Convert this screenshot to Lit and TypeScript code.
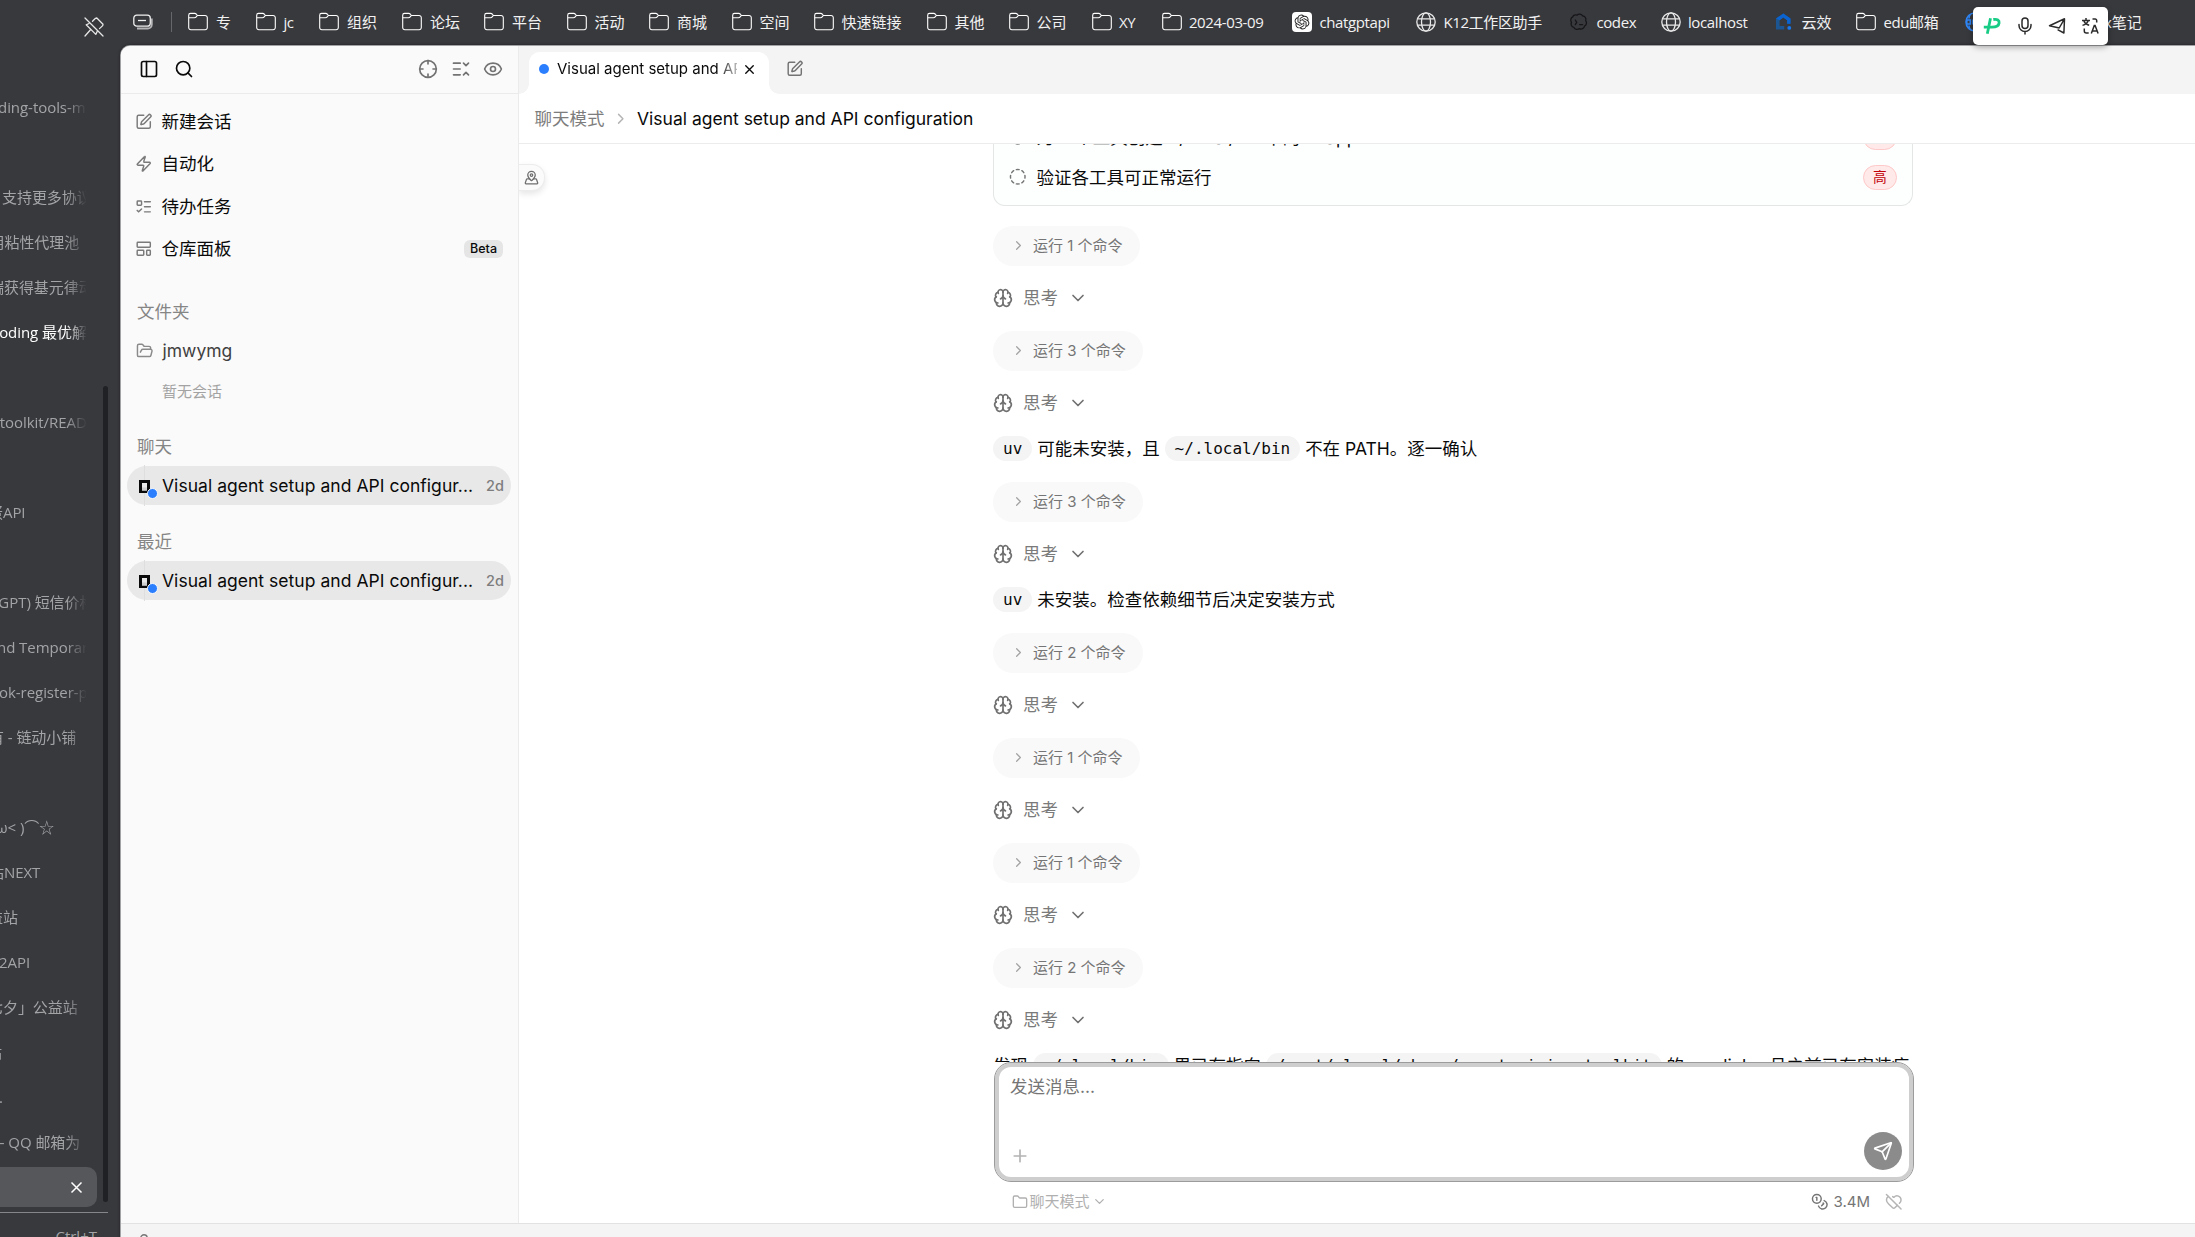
import { LitElement, html, css, svg, nothing } from "lit";
import { customElement } from "lit/decorators.js";
import { styleMap } from "lit/directives/style-map.js";

const ICONS: Record<string, any> = {
  panelLeft: svg`<rect width="18" height="18" x="3" y="3" rx="2"/><path d="M9 3v18"/>`,
  search: svg`<circle cx="11" cy="11" r="8"/><path d="m21 21-4.3-4.3"/>`,
  crosshair: svg`<circle cx="12" cy="12" r="10"/><path d="M22 12h-4M6 12H2M12 6V2M12 22v-4"/>`,
  listCollapse: svg`<path d="M3 5h8M3 12h8M3 19h8"/><path d="m15 5 3 3 3-3"/><path d="m15 19 3-3 3 3"/>`,
  eye: svg`<path d="M2.062 12.348a1 1 0 0 1 0-.696 10.75 10.75 0 0 1 19.876 0 1 1 0 0 1 0 .696 10.75 10.75 0 0 1-19.876 0"/><circle cx="12" cy="12" r="3"/>`,
  squarePen: svg`<path d="M12 3H5a2 2 0 0 0-2 2v14a2 2 0 0 0 2 2h14a2 2 0 0 0 2-2v-7"/><path d="M18.375 2.625a1 1 0 0 1 3 3l-9.013 9.014a2 2 0 0 1-.853.505l-2.873.84a.5.5 0 0 1-.62-.62l.84-2.873a2 2 0 0 1 .506-.852z"/>`,
  zap: svg`<path d="M4 14a1 1 0 0 1-.78-1.63l9.9-10.2a.5.5 0 0 1 .86.46l-1.92 6.02A1 1 0 0 0 13 10h7a1 1 0 0 1 .78 1.63l-9.9 10.2a.5.5 0 0 1-.86-.46l1.92-6.02A1 1 0 0 0 11 14z"/>`,
  listTodo: svg`<rect x="3" y="4" width="6" height="6" rx="1"/><path d="m3 17 2 2 4-4"/><path d="M13 5h8M13 12h8M13 19h8"/>`,
  layout: svg`<rect width="18" height="7" x="3" y="3" rx="1"/><rect width="9" height="7" x="3" y="14" rx="1"/><rect width="5" height="7" x="16" y="14" rx="1"/>`,
  folderOpen: svg`<path d="m6 14 1.5-2.9A2 2 0 0 1 9.24 10H20a2 2 0 0 1 1.94 2.5l-1.54 6a2 2 0 0 1-1.95 1.5H4a2 2 0 0 1-2-2V5a2 2 0 0 1 2-2h3.9a2 2 0 0 1 1.69.9l.81 1.2a2 2 0 0 0 1.67.9H18a2 2 0 0 1 2 2v2"/>`,
  folder: svg`<path d="M20 20a2 2 0 0 0 2-2V8a2 2 0 0 0-2-2h-7.9a2 2 0 0 1-1.69-.9L9.6 3.9A2 2 0 0 0 7.93 3H4a2 2 0 0 0-2 2v13a2 2 0 0 0 2 2Z"/>`,
  x: svg`<path d="M18 6 6 18M6 6l12 12"/>`,
  plus: svg`<path d="M5 12h14M12 5v14"/>`,
  chevronRight: svg`<path d="m9 18 6-6-6-6"/>`,
  chevronDown: svg`<path d="m6 9 6 6 6-6"/>`,
  mapPin: svg`<path d="M18 8c0 3.613-3.869 7.429-5.393 8.795a1 1 0 0 1-1.214 0C9.87 15.429 6 11.613 6 8a6 6 0 0 1 12 0"/><circle cx="12" cy="8" r="2"/><path d="M8.714 14h-3.71a1 1 0 0 0-.948.683l-2.004 6A1 1 0 0 0 3 22h18a1 1 0 0 0 .948-1.316l-2-6a1 1 0 0 0-.949-.684h-3.712"/>`,
  dashed: svg`<path d="M10.1 2.182a10 10 0 0 1 3.8 0"/><path d="M13.9 21.818a10 10 0 0 1-3.8 0"/><path d="M17.609 3.721a10 10 0 0 1 2.69 2.7"/><path d="M2.182 13.9a10 10 0 0 1 0-3.8"/><path d="M20.279 17.609a10 10 0 0 1-2.7 2.69"/><path d="M21.818 10.1a10 10 0 0 1 0 3.8"/><path d="M3.721 6.391a10 10 0 0 1 2.7-2.69"/><path d="M6.391 20.279a10 10 0 0 1-2.69-2.7"/>`,
  brain: svg`<path d="M12 18V5"/><path d="M15 13a4.17 4.17 0 0 1-3-4 4.17 4.17 0 0 1-3 4"/><path d="M17.598 6.5A3 3 0 1 0 12 5a3 3 0 1 0-5.598 1.5"/><path d="M17.997 5.125a4 4 0 0 1 2.526 5.77"/><path d="M18 18a4 4 0 0 0 2-7.464"/><path d="M19.967 17.483A4 4 0 1 1 12 18a4 4 0 1 1-7.967-.517"/><path d="M6 18a4 4 0 0 1-2-7.464"/><path d="M6.003 5.125a4 4 0 0 0-2.526 5.77"/>`,
  send: svg`<path d="M14.536 21.686a.5.5 0 0 0 .937-.024l6.5-19a.496.496 0 0 0-.635-.635l-19 6.5a.5.5 0 0 0-.024.937l7.93 3.18a2 2 0 0 1 1.112 1.11z"/><path d="m21.854 2.147-10.94 10.939"/>`,
  coins: svg`<circle cx="8" cy="8" r="6"/><path d="M18.09 10.37A6 6 0 1 1 10.34 18"/><path d="M7 6h1v4"/><path d="m16.71 13.88.7.71-2.82 2.82"/>`,
  heartOff: svg`<path d="M10.5 4.893a5.5 5.5 0 0 1 1.091.931.56.56 0 0 0 .818 0A5.49 5.49 0 0 1 22 9.5c0 1.872-1.002 3.356-2.187 4.655"/><path d="m16.967 16.967-3.459 3.346a2 2 0 0 1-3 .019L5 15c-1.5-1.5-3-3.2-3-5.5a5.5 5.5 0 0 1 2.747-4.761"/><path d="m2 2 20 20"/>`,
};

const icon = (name: string, size = 20, stroke = 2, cls = "") => html`<svg
  class="ic ${cls}" width=${size} height=${size} viewBox="0 0 24 24" fill="none"
  stroke="currentColor" stroke-width=${stroke} stroke-linecap="round" stroke-linejoin="round"
>${ICONS[name]}</svg>`;

const GLYPHS: Record<string, any> = {
  folder: html`<svg class="ic" width="20" height="20" viewBox="0 0 20 20" fill="none" stroke="#fff" stroke-width="1.1"><path d="M.7 3.2A1.8 1.8 0 0 1 2.5 1.4h4.3c.6 0 1 .2 1.4.6l1.2 1.5h7.7a2.2 2.2 0 0 1 2.2 2.2v9.8a2.2 2.2 0 0 1-2.2 2.2H2.9a2.2 2.2 0 0 1-2.2-2.2z"/><path d="M.7 5.7h5.6c.8 0 1.400-.2 1.900-.8l1.200-1.400"/></svg>`,
  globe: html`<svg class="ic" width="20" height="20" viewBox="0 0 20 20" fill="none" stroke="#e8e8e8" stroke-width="1.300"><circle cx="10" cy="10" r="9.200"/><ellipse cx="10" cy="10" rx="4.500" ry="9.200"/><path d="M1.500 6.800h17M1.500 13.200h17"/></svg>`,
  blueGlobe: html`<svg class="ic" width="20" height="20" viewBox="0 0 20 20" fill="none" stroke="#2f86f6" stroke-width="1.600"><circle cx="10" cy="10" r="9"/><path d="M5 2.500a14 14 0 0 0-1 4M5 17.500a14 14 0 0 1-1-4"/><rect x="1.800" y="8" width="3.500" height="4"/><path d="M8 7.500v5"/></svg>`,
  openai: html`<svg class="ic" width="20" height="20" viewBox="0 0 20 20"><rect width="20" height="20" rx="4" fill="#fff"/><path transform="translate(2.600 2.600) scale(.617)" fill="#222" d="M22.2819 9.8211a5.9847 5.9847 0 0 0-.5157-4.9108 6.0462 6.0462 0 0 0-6.5098-2.9A6.0651 6.0651 0 0 0 4.9807 4.1818a5.9847 5.9847 0 0 0-3.9977 2.9 6.0462 6.0462 0 0 0 .7427 7.0966 5.98 5.98 0 0 0 .511 4.9107 6.051 6.051 0 0 0 6.5146 2.9001A5.9847 5.9847 0 0 0 13.2599 24a6.0557 6.0557 0 0 0 5.7718-4.2058 5.9894 5.9894 0 0 0 3.9977-2.9001 6.0557 6.0557 0 0 0-.7475-7.0729zm-9.022 12.6081a4.4755 4.4755 0 0 1-2.8764-1.0408l.1419-.0804 4.7783-2.7582a.7948.7948 0 0 0 .3927-.6813v-6.7369l2.02 1.1686a.071.071 0 0 1 .038.052v5.5826a4.504 4.504 0 0 1-4.4945 4.4944zm-9.6607-4.1254a4.4708 4.4708 0 0 1-.5346-3.0137l.142.0852 4.783 2.7582a.7712.7712 0 0 0 .7806 0l5.8428-3.3685v2.3324a.0804.0804 0 0 1-.0332.0615L9.74 19.9502a4.4992 4.4992 0 0 1-6.1408-1.6464zM2.3408 7.8956a4.485 4.485 0 0 1 2.3655-1.9728V11.6a.7664.7664 0 0 0 .3879.6765l5.8144 3.3543-2.0201 1.1685a.0757.0757 0 0 1-.071 0l-4.8303-2.7865A4.504 4.504 0 0 1 2.3408 7.872zm16.5963 3.8558L13.1038 8.364 15.1192 7.2a.0757.0757 0 0 1 .071 0l4.8303 2.7913a4.4944 4.4944 0 0 1-.6765 8.1042v-5.6772a.79.79 0 0 0-.407-.667zm2.0107-3.0231l-.142-.0852-4.7735-2.7818a.7759.7759 0 0 0-.7854 0L9.409 9.2297V6.8974a.0662.0662 0 0 1 .0284-.0615l4.8303-2.7866a4.4992 4.4992 0 0 1 6.6802 4.66zM8.3065 12.863l-2.02-1.1638a.0804.0804 0 0 1-.038-.0567V6.0742a4.4992 4.4992 0 0 1 7.3757-3.4537l-.142.0805L8.704 5.459a.7948.7948 0 0 0-.3927.6813zm1.0976-2.3654l2.602-1.4998 2.6069 1.4998v2.9994l-2.5974 1.4997-2.6067-1.4997Z"/></svg>`,
  codex: html`<svg class="ic" width="20" height="20" viewBox="0 0 20 20" fill="none" stroke="#161618" stroke-width="1.300" stroke-linecap="round" stroke-linejoin="round"><path d="M8 3.200c1.600-1.600 4.600-1.300 5.700.700 2.300.2 3.800 2.500 3 4.700 1.400 1.800.9 4.600-1.200 5.600-.4 2.300-3 3.500-5 2.400-1.800 1.400-4.700.9-5.600-1.200-2.300-.4-3.500-3-2.400-5-1.300-1.900-.8-4.700 1.300-5.600C4.300 3.300 6.200 2.500 8 3.200z"/><path d="m6.300 8 1.400 2.300-1.400 2.300M10.600 12.600h3"/></svg>`,
  yunxiao: html`<svg class="ic" width="20" height="20" viewBox="0 0 20 20"><path d="M2 17.500V6.500l7.300-5 7.200 5v5.300h-3.400V8.200L9.300 5.500 5.600 8.200v5.700h4.600v3.600z" fill="#1b5592"/><path d="m2 6.500 7.300-5 7.200 5v5.300h-3.400V8.200L9.300 5.500 5.600 8.200z" fill="#0a63cf"/><circle cx="15.300" cy="15.900" r="1.900" fill="#1778ee"/></svg>`,
};

interface Bookmark { glyph: string; label: string; width: number; latin?: boolean; }

/* Width runs from the start of one bookmark to the start of the next. */
const BOOKMARKS: Bookmark[] = [
  { glyph: "folder", label: "专", width: 68 },
  { glyph: "folder", label: "jc", width: 63, latin: true },
  { glyph: "folder", label: "组织", width: 83 },
  { glyph: "folder", label: "论坛", width: 82 },
  { glyph: "folder", label: "平台", width: 82.5 },
  { glyph: "folder", label: "活动", width: 82.5 },
  { glyph: "folder", label: "商城", width: 82.5 },
  { glyph: "folder", label: "空间", width: 82 },
  { glyph: "folder", label: "快速链接", width: 113 },
  { glyph: "folder", label: "其他", width: 82 },
  { glyph: "folder", label: "公司", width: 83 },
  { glyph: "folder", label: "XY", width: 70, latin: true },
  { glyph: "folder", label: "2024-03-09", width: 130.5, latin: true },
  { glyph: "openai", label: "chatgptapi", width: 124, latin: true },
  { glyph: "globe", label: "K12工作区助手", width: 153, latin: true },
  { glyph: "codex", label: "codex", width: 91.5, latin: true },
  { glyph: "globe", label: "localhost", width: 113, latin: true },
  { glyph: "yunxiao", label: "云效", width: 82.5 },
  { glyph: "folder", label: "edu邮箱", width: 109, latin: true },
  { glyph: "blueGlobe", label: "", width: 139 },
];

/* Browser tabs: text with its horizontal scroll offset; null is an empty slot. */
const TABS: ([string, number] | null)[] = [
  ["ding-tools-mo", -2], null, ["支持更多协议", 2], ["用粘性代理池", -10.5],
  ["端获得基元律动", -11], ["coding 最优解", -8], null, ["-toolkit/READ", -5],
  null, ["蛋API", -12], null, ["(GPT) 短信价格", -6], ["nd Temporary", -3],
  ["ok-register-p", -1], ["有 - 链动小铺", -11], null, ["ω< )⌒☆", -4],
  ["站NEXT", -11], ["益站", -12], ["2API", -1], ["七夕」公益站", -12],
  ["站", -13], [".", -1], ["– QQ 邮箱为", -3],
];
const ACTIVE_TAB = 5;

type Block = { kind: "run"; n: number } | { kind: "think" } | { kind: "text"; parts: (string | { code: string })[] };
const run = (n: number): Block => ({ kind: "run", n });
const think: Block = { kind: "think" };
const BLOCKS: Block[] = [
  run(1), think, run(3), think,
  { kind: "text", parts: [{ code: "uv" }, " 可能未安装，且 ", { code: "~/.local/bin" }, " 不在 PATH。逐一确认"] },
  run(3), think,
  { kind: "text", parts: [{ code: "uv" }, " 未安装。检查依赖细节后决定安装方式"] },
  run(2), think, run(1), think, run(1), think, run(2), think,
  { kind: "text", parts: ["发现 ", { code: "~/.local/bin" }, " 里已有指向 ", { code: "/root/.local/share/agent-mining-toolkit" }, " 的 symlink，且之前已有安装痕"] },
];

const shared = css`
  * { box-sizing: border-box; }
  .ic { display: block; flex: none; }
`;

@customElement("tab-rail")
class TabRail extends LitElement {
  static styles = [shared, css`
    :host { display: flex; flex-direction: column; width: 121px; height: 100%; color: #a3a4a6;
      font: 15px/20px "Open Sans", "Noto Sans CJK SC", sans-serif; overflow: hidden; }
    .pin { height: 84px; padding: 17px 0 0 83.500px; flex: none; color: #e6e6e6; }
    .body { display: flex; height: 1119px; flex: none; }
    .list { width: 103px; }
    .slot { height: 45px; width: 86px; display: flex; align-items: center; overflow: hidden; white-space: nowrap;
      letter-spacing: -.05px; -webkit-mask-image: linear-gradient(90deg, #000 66px, transparent 87px); }
    .slot.active { color: #fff; }
    .current { height: 40px; width: 97px; margin-top: 3px; border-radius: 0 10px 10px 0; background: #56575b; color: #fff;
      display: flex; align-items: center; justify-content: flex-end; padding-right: 13px; }
    .bar { width: 5px; height: 816px; margin-top: 302px; border-radius: 3px; background: #202124; }
    .foot { width: 108px; margin-top: 9px; border-top: 1px solid #85868a; padding: 13px 11px 0 0; text-align: right; flex: none; }
  `];
  render() {
    return html`
      <div class="pin"><svg class="ic" width="20" height="20" viewBox="0 0 20 20" fill="none" stroke="currentColor" stroke-width="1.300" stroke-linecap="round" stroke-linejoin="round"><path d="M1 1l18 18"/><path d="M8.500 4.300 11.500 1.300l1.300-.3 6.200 6.300-.3 1.300-3.200 3"/><path d="M5 6.500l-2.800 1.300L11.800 17.400l1.500-3.200"/><path d="M6.500 12.700 1 19"/></svg></div>
      <div class="body">
        <div class="list">
          ${TABS.map((t, i) => html`<div class="slot ${i === ACTIVE_TAB ? "active" : ""}">
            ${t ? html`<span style=${styleMap({ marginLeft: `${t[1]}px` })}>${t[0]}</span>` : nothing}</div>`)}
          <div class="current"><svg class="ic" width="15" height="15" viewBox="0 0 15 15" stroke="currentColor" stroke-width="1.500"><path d="m2.500 2.500 10 10m0-10-10 10"/></svg></div>
        </div>
        <div class="bar"></div>
      </div>
      <div class="foot">Ctrl+T</div>`;
  }
}

@customElement("bookmark-bar")
class BookmarkBar extends LitElement {
  static styles = [shared, css`
    :host { display: flex; align-items: center; height: 46px; padding: 0 0 2px 12px; color: #f2f2f2; white-space: nowrap;
      font: 15px/20px "Open Sans", "Noto Sans CJK SC", sans-serif; }
    .sep { width: 1px; height: 20px; background: #66676b; margin: 0 16px 0 18px; }
    .mark { display: flex; align-items: center; gap: 8px; flex: none; }
    .label { padding-bottom: 1px; }
    .latin { letter-spacing: -.37px; margin-left: -.6px; }
  `];
  render() {
    return html`
      <svg class="ic" width="20" height="16" viewBox="0 0 20 16" fill="none" stroke="#f0f0f0" stroke-width="1.300"><rect x=".8" y="1.200" width="16.500" height="11" rx="3"/><path d="M5 6.500h8"/><path d="M18.800 4.500v6a4 4 0 0 1-4 4H4" stroke="#b5b5b7" stroke-width="1.800"/></svg>
      <span class="sep"></span>
      ${BOOKMARKS.map((b) => html`<span class="mark" style=${styleMap({ width: `${b.width}px` })}>
        ${GLYPHS[b.glyph]}<span class="label ${b.latin ? "latin" : ""}">${b.label}</span></span>`)}
      <span class="label">x笔记</span>`;
  }
}

@customElement("side-bar")
class SideBar extends LitElement {
  static styles = [shared, css`
    :host { display: flex; flex-direction: column; width: 398px; flex: none; background: #fafafa; border-right: 1px solid #ebebeb; color: #0a0a0a;
      font: 17.5px/25px Inter, "Noto Sans CJK SC", sans-serif; white-space: nowrap; }
    .head { display: flex; align-items: center; height: 48px; border-bottom: 1px solid #ebebeb; padding: 0 15px 1px 18px; gap: 15px; flex: none; }
    .tools { display: flex; gap: 12.500px; margin-left: auto; color: #737373; }
    .nav { padding: 6px 15px 0 14px; }
    .item { display: flex; align-items: center; height: 42.500px; gap: 9px; }
    .item .ic { color: #7a7a7a; }
    .beta { margin-left: auto; background: #e5e5e5; border-radius: 6px; font-size: 12.500px; line-height: 18px; font-weight: 500; padding: 0 6px; }
    .title { color: #858585; padding-left: 16px; height: 25px; }
    .t1 { margin-top: 28.500px; }
    .t2 { margin-top: 32.500px; }
    .t3 { margin-top: 24px; }
    .dir { display: flex; align-items: center; gap: 9px; padding-left: 15px; color: #404040; height: 25px; margin-top: 14.500px; }
    .dir .ic { color: #8a8a8a; }
    .none { font-size: 15px; line-height: 20px; color: #a3a3a3; padding-left: 41px; margin-top: 18.500px; }
    .chat { display: flex; align-items: center; position: relative; height: 39px; margin: 7px 7px 0 6px; padding: 0 7px 0 12px; border-radius: 20px; background: #e8e8e8; }
    .rail { position: absolute; left: 17px; top: -1px; width: 1px; height: 41px; background: #dedede; }
    .logo { position: relative; width: 23px; height: 20px; flex: none; }
    .dot { position: absolute; left: 8px; top: 12px; width: 11px; height: 11px; border-radius: 50%; background: #2b7fff; border: 1.500px solid #fafafa; }
    .name { flex: 1; letter-spacing: .035px; }
    .age { font-size: 14.500px; color: #7d7d7d; font-weight: 500; }
  `];
  chat() {
    return html`<div class="chat"><span class="rail"></span>
      <span class="logo"><svg class="ic" width="13" height="20" viewBox="0 0 13 20"><path d="M0 4h11v13H0z" fill="#0a0a0a"/><path d="M3 7h5v7.500H3z" fill="#e8e8e8"/><path d="M3 11.500h5v3H3z" fill="#cfcfcf"/></svg><span class="dot"></span></span>
      <span class="name">Visual agent setup and API configur...</span><span class="age">2d</span></div>`;
  }
  render() {
    return html`
      <div class="head">${icon("panelLeft")}${icon("search")}
        <span class="tools">${icon("crosshair")}${icon("listCollapse")}${icon("eye")}</span></div>
      <div class="nav">
        <div class="item">${icon("squarePen", 17.5)}新建会话</div>
        <div class="item">${icon("zap", 17.5)}自动化</div>
        <div class="item">${icon("listTodo", 17.5)}待办任务</div>
        <div class="item">${icon("layout", 17.5)}仓库面板<span class="beta">Beta</span></div>
      </div>
      <div class="title t1">文件夹</div>
      <div class="dir">${icon("folderOpen", 17.5)}jmwymg</div>
      <div class="none">暂无会话</div>
      <div class="title t2">聊天</div>
      ${this.chat()}
      <div class="title t3">最近</div>
      ${this.chat()}`;
  }
}

@customElement("chat-view")
class ChatView extends LitElement {
  static styles = [shared, css`
    :host { display: flex; flex-direction: column; flex: 1; min-width: 0; background: #fff; color: #0a0a0a;
      font: 17.5px/26px Inter, "Noto Sans CJK SC", sans-serif; white-space: nowrap; }
    .strip { display: flex; align-items: flex-end; height: 48px; background: #f4f4f4; padding-left: 10px; flex: none; }
    .tab { position: relative; display: flex; align-items: center; width: 240px; height: 42px; padding: 0 12px 8px 10px; background: #fff; border-radius: 11px 11px 0 0; font-size: 15px; line-height: 20px; }
    .tab::before, .tab::after { content: ""; position: absolute; bottom: 0; width: 10px; height: 10px; }
    .tab::before { left: -10px; background: radial-gradient(circle at 0 0, transparent 9.500px, #fff 10px); }
    .tab::after { right: -10px; background: radial-gradient(circle at 100% 0, transparent 9.500px, #fff 10px); }
    .live { width: 10px; height: 10px; border-radius: 50%; background: #2b7fff; flex: none; margin-right: 8px; }
    .label { width: 180px; overflow: hidden; -webkit-mask-image: linear-gradient(90deg, #000 160px, transparent 188px); }
    .tab .ic { margin-left: 4.500px; }
    .new { margin: 0 0 17px 17px; color: #737373; }
    .crumb { display: flex; align-items: center; height: 50px; border-bottom: 1px solid #ececec; padding-left: 15.500px; flex: none; }
    .mode { color: #7d7d7d; }
    .crumb .ic { margin: 0 8px 0 7px; color: #b5b5b5; }
    .scroll { position: relative; height: 918px; overflow: hidden; flex: none; padding-left: 474px; }
    .map { position: absolute; left: 0; top: 20px; width: 26px; height: 27px; border: 1px solid #ececec; border-left: 0; border-radius: 0 13px 13px 0; color: #6f6f6f; background: #fbfbfb;
      display: grid; place-items: center; box-shadow: 0 3px 6px rgba(0,0,0,.1); }
    .flow { width: 920px; display: flex; flex-direction: column; align-items: flex-start; gap: 20px; margin-top: -27px; }
    .card { width: 920px; border: 1px solid #e4e6e6; border-top: 0; border-radius: 0 0 12px 12px; padding: 0 15px 8px; background: #fdfefe; }
    .task { display: flex; align-items: center; height: 40px; }
    .task .ic { color: #757575; margin: 0 10px 0 0; }
    .what { padding-top: 2px; }
    .high { margin-left: auto; width: 34px; height: 25px; border-radius: 13px; border: 1px solid #ffc9c9; background: #ffe9e9; color: #c10007; font-size: 13.750px; line-height: 23px; text-align: center; }
    .run { display: flex; align-items: center; height: 40px; padding: 0 17px 1px 18px; border-radius: 20px; background: #f9f9f9; color: #757575; font-size: 15px; }
    .run .ic { margin-right: 7px; color: #a3a3a3; }
    .think { display: flex; align-items: center; height: 25px; padding-bottom: 1px; color: #7a7a7a; }
    .think span { margin: 0 10px; }
    .think .ic { color: #707070; }
    .text { height: 26px; }
    .code { display: inline-block; height: 25px; line-height: 26px; padding: 0 10px; border-radius: 12.500px; background: #f4f4f4; font-family: "DejaVu Sans Mono", monospace; font-size: 16px; vertical-align: top; }
    .composer { width: 920px; height: 120px; margin-left: 475px; flex: none; border: 1px solid #9c9c9c; border-radius: 17px; background: #fff; box-shadow: inset 0 0 0 4px #cecece;
      display: flex; flex-direction: column; justify-content: space-between; padding: 11px 11px 11px 15px; }
    .hint { color: #757575; }
    .acts { display: flex; align-items: center; justify-content: space-between; }
    .plus { color: #b3b3b3; margin-top: 10px; }
    .send { width: 38px; height: 38px; border-radius: 50%; background: #8b8b8b; color: #fff; display: grid; place-items: center; }
    .foot { display: flex; align-items: center; height: 41px; width: 920px; margin-left: 475px; padding: 0 11.500px 2px 17.500px; font-size: 15px; flex: none; color: #b0b0b0; }
    .where { margin-left: 2px; }
    .foot .cd { margin-left: 2px; }
    .stats { display: flex; align-items: center; margin-left: auto; color: #757575; }
    .stats span { margin: 0 15px 0 5px; }
    .stats .off { color: #b5b5b5; }
  `];
  block(b: Block) {
    if (b.kind === "run") return html`<div class="run">${icon("chevronRight", 15, 2)}运行 ${b.n} 个命令</div>`;
    if (b.kind === "think") return html`<div class="think">${icon("brain")}<span>思考</span>${icon("chevronDown")}</div>`;
    return html`<div class="text">${b.parts.map((p) => typeof p === "string" ? p : html`<span class="code">${p.code}</span>`)}</div>`;
  }
  render() {
    return html`
      <div class="strip">
        <div class="tab"><span class="live"></span><span class="label">Visual agent setup and API</span>${icon("x", 15, 2.2)}</div>
        <span class="new">${icon("squarePen", 17.5)}</span>
      </div>
      <div class="crumb"><span class="mode">聊天模式</span>${icon("chevronRight", 17.5)}<span>Visual agent setup and API configuration</span></div>
      <div class="scroll">
        <div class="map">${icon("mapPin", 15)}</div>
        <div class="flow">
          <div class="card">
            <div class="task">${icon("dashed", 17.5)}<span class="what">为 4 个工具创建 ~/.local/bin 下的 wrapper</span><span class="high">高</span></div>
            <div class="task">${icon("dashed", 17.5)}<span class="what">验证各工具可正常运行</span><span class="high">高</span></div>
          </div>
          ${BLOCKS.map((b) => this.block(b))}
        </div>
      </div>
      <div class="composer"><div class="hint">发送消息...</div>
        <div class="acts"><span class="plus">${icon("plus")}</span><span class="send">${icon("send")}</span></div></div>
      <div class="foot">${icon("folder", 16)}<span class="where">聊天模式</span>${icon("chevronDown", 15, 2, "cd")}
        <span class="stats">${icon("coins", 17.5)}<span>3.4M</span>${icon("heartOff", 17.5, 2, "off")}</span></div>`;
  }
}

@customElement("app-root")
class AppRoot extends LitElement {
  static styles = [shared, css`
    :host { display: block; width: 100vw; height: 100vh; overflow: hidden; position: relative; background: #38393d; }
    .shell { display: flex; height: 100%; }
    .right { display: flex; flex-direction: column; flex: 1; min-width: 0; }
    .window { display: flex; flex-direction: column; flex: 1; min-height: 0; background: #fff; border-radius: 9px 0 0 0; overflow: hidden; box-shadow: 0 0 0 1px #a2a3a5, 0 0 3px 1px #1f2022; }
    .panes { display: flex; height: 1177px; flex: none; }
    .status { flex: 1; border-top: 1px solid #e2e2e2; background: #f4f4f4; padding: 10px 0 0 19px; }
    .float { position: absolute; left: 1973px; top: 7px; width: 135px; height: 38px; border-radius: 5px; background: #fff; box-shadow: 0 2px 6px rgba(0,0,0,.35);
      display: flex; align-items: center; justify-content: space-between; padding: 0 9px 0 10px; color: #2b2b2b; }
  `];
  render() {
    return html`
      <div class="shell">
        <tab-rail></tab-rail>
        <div class="right">
          <bookmark-bar></bookmark-bar>
          <div class="window">
            <div class="panes"><side-bar></side-bar><chat-view></chat-view></div>
            <div class="status"><svg class="ic" width="8" height="8" viewBox="0 0 8 8"><circle cx="4" cy="4" r="3.200" fill="none" stroke="#777" stroke-width="1.400"/></svg></div>
          </div>
        </div>
      </div>
      <div class="float">
        <svg class="ic" width="18" height="18" viewBox="0 0 18 18" fill="none" stroke="#18cc86" stroke-width="2.800"><path d="M7.500 1.200 4.300 16.800"/><path d="M10.300 2.500c4-.7 6.200.7 5.800 3.500-.4 3-3.500 4.200-7.100 4.200H.8"/></svg>
        <svg class="ic" width="16" height="18" viewBox="0 0 16 18" fill="none" stroke="currentColor" stroke-width="1.500" stroke-linecap="round"><rect x="5" y="1" width="6" height="10.500" rx="3"/><path d="M2 7.500v1a6 6 0 0 0 12 0v-1M8 14.500V17"/></svg>
        <svg class="ic" width="18" height="18" viewBox="0 0 18 18" fill="none" stroke="currentColor" stroke-width="1.500" stroke-linejoin="round"><path d="M16.500 1.800 1.500 8.700l9.700 2.300zM16.500 1.800l-.6 14.200-6.300-3.400"/></svg>
        <svg class="ic" width="17" height="18" viewBox="0 0 17 18" fill="none" stroke="currentColor" stroke-width="1.500"><path d="M0 3.500h8M4 1v2.500M1.700 3.500c.8 2.500 2.500 4 5.500 4.700M6.300 3.500C5.500 6 3.800 7.500.5 8.400"/><path d="m9.300 16.500 3-8h.8l3 8M10.300 14h5M10.500 2h2.700a1.500 1.500 0 0 1 1.500 1.500V5.500M2.300 11.500v2.500a2 2 0 0 0 2 2h2.400"/></svg>
      </div>`;
  }
}
